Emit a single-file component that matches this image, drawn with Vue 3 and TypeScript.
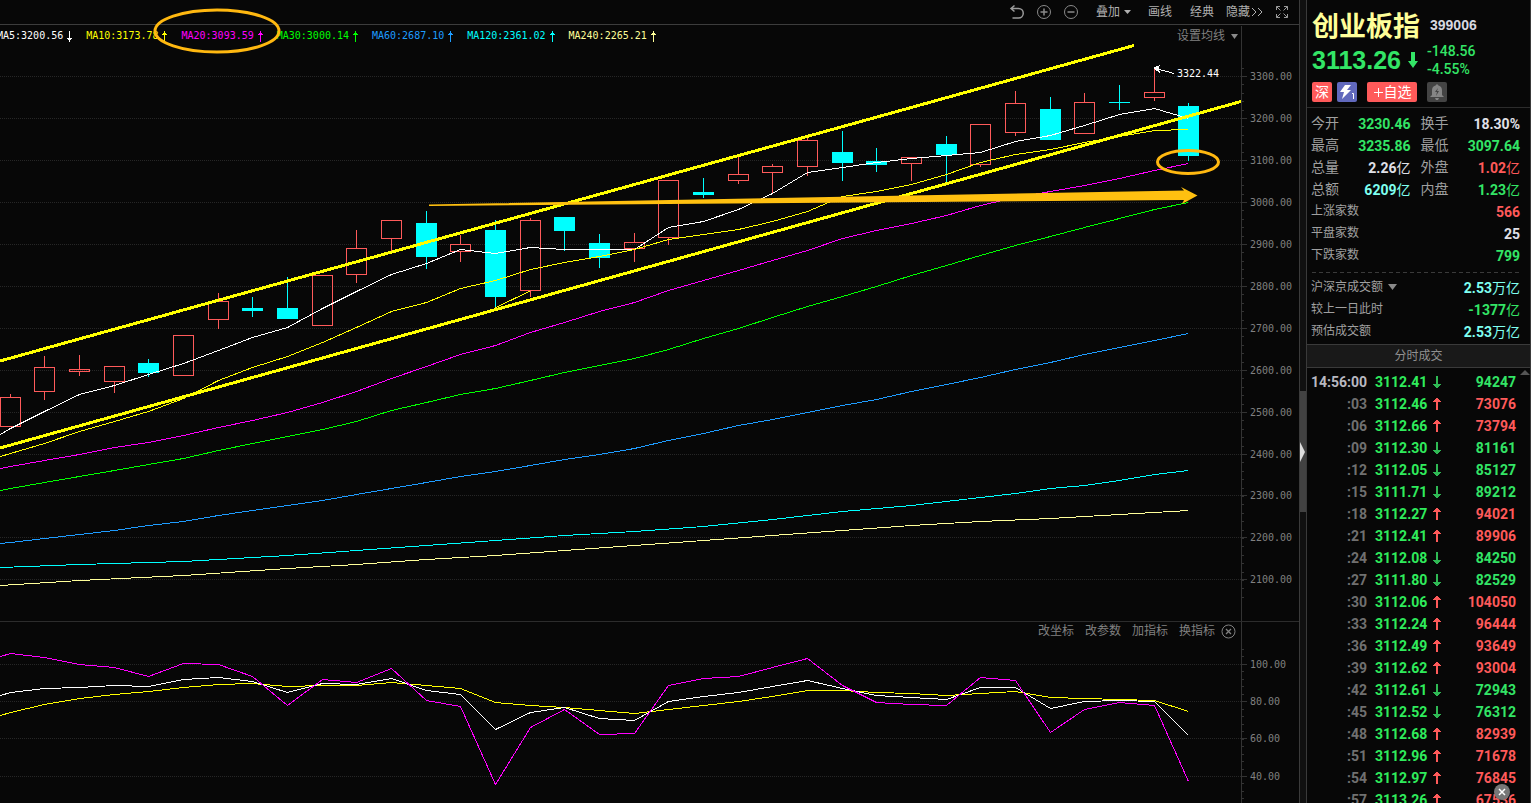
<script setup lang="ts">
type Point = [number, number]
type Candle = { x: number; top: number; bottom: number; high: number; low: number; up: boolean }
type Tone = 'green' | 'red' | 'white' | 'aqua'
type Stat = { label: string; value: string; unit?: string; tone: Tone; menu?: boolean }

const averages = [
  { name: 'MA5', value: '3200.56', up: false, color: '#ffffff' },
  { name: 'MA10', value: '3173.78', up: true, color: '#ffff00' },
  { name: 'MA20', value: '3093.59', up: true, color: '#ff00ff' },
  { name: 'MA30', value: '3000.14', up: true, color: '#00ff00' },
  { name: 'MA60', value: '2687.10', up: true, color: '#1e9cff' },
  { name: 'MA120', value: '2361.02', up: true, color: '#00ffff' },
  { name: 'MA240', value: '2265.21', up: true, color: '#ffff99' },
]

// x, body top, body bottom, wick top, wick bottom, rising
const rawCandles: [number, number, number, number, number, number][] = [
  [10, 397, 427, 394, 427, 1], [44, 367, 392, 356, 400, 1], [79, 369, 372, 355, 376, 1],
  [114, 366, 382, 366, 393, 1], [148, 363, 373, 359, 377, 0], [183, 335, 376, 335, 376, 1],
  [218, 301, 320, 293, 329, 1], [252, 308, 311, 297, 317, 0], [287, 308, 319, 277, 319, 0],
  [322, 275, 326, 275, 326, 1], [356, 248, 275, 230, 283, 1], [391, 220, 239, 220, 251, 1],
  [426, 223, 257, 211, 269, 0], [460, 244, 252, 235, 262, 1], [495, 230, 297, 220, 308, 0],
  [530, 220, 291, 218, 297, 1], [564, 217, 231, 217, 251, 0], [599, 243, 258, 234, 268, 0],
  [634, 242, 249, 233, 262, 1], [668, 180, 238, 180, 245, 1], [703, 192, 195, 178, 198, 0],
  [738, 174, 181, 157, 184, 1], [772, 166, 173, 164, 194, 1], [807, 140, 167, 138, 176, 1],
  [842, 152, 163, 131, 181, 0], [876, 161, 165, 148, 172, 0], [911, 157, 164, 157, 181, 1],
  [946, 144, 155, 136, 182, 0], [980, 124, 165, 124, 167, 1], [1015, 103, 133, 91, 136, 1],
  [1050, 109, 140, 97, 140, 0], [1084, 102, 134, 93, 134, 1], [1119, 102, 103, 85, 110, 0],
  [1154, 92, 98, 67, 101, 1], [1188, 106, 156, 103, 161, 0],
]
const candles: Candle[] = rawCandles.map(([x, top, bottom, high, low, up]) => ({
  x, top, bottom, high, low, up: up === 1,
}))
const xs = rawCandles.map((c) => c[0])

const join = (points: Point[]) => points.map((p) => p.join(',')).join(' ')
const series = (start: number, ys: number[]) => join([[0, start], ...ys.map((y, i): Point => [xs[i], y])])

const lines = [
  {
    color: '#ffffff',
    points: series(434, [428, 411, 394, 385, 374, 363, 350, 337, 327, 308, 291, 274, 263, 249, 253, 247, 249, 249, 249, 227, 221, 209, 193, 172, 167, 162, 158, 155, 152, 141, 135, 125, 114, 108, 118]),
  },
  {
    color: '#ffff00',
    points: series(456, [453, 443, 431, 421, 411, 398, 380, 367, 356, 342, 327, 311, 302, 288, 280, 269, 262, 256, 249, 239, 234, 229, 221, 211, 196, 191, 184, 174, 162, 154, 149, 142, 136, 130, 129]),
  },
  {
    color: '#ff00ff',
    points: series(468, [466, 460, 454, 447, 442, 435, 427, 420, 412, 402, 391, 378, 366, 354, 345, 332, 322, 311, 302, 290, 280, 270, 260, 250, 238, 230, 223, 215, 205, 197, 191, 185, 178, 170, 163]),
  },
  {
    color: '#00ff00',
    points: series(490, [488, 482, 476, 470, 464, 458, 450, 443, 436, 429, 421, 410, 402, 394, 388, 380, 372, 365, 358, 349, 338, 328, 317, 306, 296, 286, 275, 265, 255, 245, 236, 227, 218, 209, 202]),
  },
  {
    color: '#1e9cff',
    points: series(543, [542, 538, 534, 530, 525, 521, 515, 510, 505, 500, 494, 488, 482, 476, 471, 465, 459, 454, 448, 440, 433, 425, 419, 412, 405, 399, 391, 384, 377, 369, 362, 354, 347, 340, 333]),
  },
  {
    color: '#00ffff',
    points: join([[0, 567], [79, 564], [183, 561], [287, 555], [356, 550], [426, 545], [495, 540], [564, 535], [634, 531], [703, 526], [772, 519], [842, 511], [911, 505], [980, 497], [1015, 493], [1050, 488], [1084, 485], [1119, 480], [1154, 474], [1188, 470]]),
  },
  {
    color: '#ffff99',
    points: join([[0, 585], [79, 580], [183, 575], [287, 568], [356, 564], [426, 559], [495, 555], [564, 550], [634, 545], [703, 540], [772, 535], [842, 530], [911, 525], [980, 521], [1050, 518], [1119, 514], [1188, 510]]),
  },
]

const oscillators = [
  {
    color: '#ffff00',
    points: series(715, [712, 704, 698, 694, 691, 687, 684, 683, 686, 685, 685, 682, 685, 688, 702, 705, 707, 710, 713, 709, 705, 701, 696, 690, 690, 692, 693, 695, 693, 691, 697, 698, 699, 700, 711]),
  },
  {
    color: '#ffffff',
    points: series(695, [692, 688, 687, 685, 686, 679, 677, 681, 692, 683, 684, 678, 690, 694, 729, 712, 707, 718, 720, 701, 696, 692, 686, 680, 688, 695, 697, 699, 687, 687, 708, 701, 700, 701, 735]),
  },
  {
    color: '#ff00ff',
    points: series(656, [653, 657, 664, 667, 676, 663, 664, 676, 705, 679, 682, 668, 700, 706, 784, 727, 709, 734, 733, 685, 678, 676, 667, 658, 685, 702, 704, 705, 677, 680, 732, 709, 702, 705, 781]),
  },
]

const priceMarks = [76, 118, 160, 202, 244, 286, 328, 370, 412, 454, 495, 537, 579].map((y, i) => ({
  y,
  label: `${3300 - i * 100}.00`,
}))
const priceTicks = Array.from({ length: 64 }, (_, i) => Math.round(67.6 + i * 8.4)).filter((y) => y < 615)
const oscMarks = [
  { y: 664, label: '100.00' },
  { y: 701, label: '80.00' },
  { y: 738, label: '60.00' },
  { y: 776, label: '40.00' },
]
const oscTicks = Array.from({ length: 21 }, (_, i) => Math.round(649 + i * 7.47))

const indicatorActions = ['改坐标', '改参数', '加指标', '换指标']

const pairRows: Stat[][] = [
  [{ label: '今开', value: '3230.46', tone: 'green' }, { label: '换手', value: '18.30%', tone: 'white' }],
  [{ label: '最高', value: '3235.86', tone: 'green' }, { label: '最低', value: '3097.64', tone: 'green' }],
  [{ label: '总量', value: '2.26', unit: '亿', tone: 'white' }, { label: '外盘', value: '1.02', unit: '亿', tone: 'red' }],
  [{ label: '总额', value: '6209', unit: '亿', tone: 'aqua' }, { label: '内盘', value: '1.23', unit: '亿', tone: 'green' }],
]
const breadthRows: Stat[] = [
  { label: '上涨家数', value: '566', tone: 'red' },
  { label: '平盘家数', value: '25', tone: 'white' },
  { label: '下跌家数', value: '799', tone: 'green' },
]
const turnoverRows: Stat[] = [
  { label: '沪深京成交额', value: '2.53', unit: '万亿', tone: 'aqua', menu: true },
  { label: '较上一日此时', value: '-1377', unit: '亿', tone: 'green' },
  { label: '预估成交额', value: '2.53', unit: '万亿', tone: 'aqua' },
]

const trades: { time: string; price: string; up: boolean; volume: string }[] = [
  { time: '14:56:00', price: '3112.41', up: false, volume: '94247' },
  { time: ':03', price: '3112.46', up: true, volume: '73076' },
  { time: ':06', price: '3112.66', up: true, volume: '73794' },
  { time: ':09', price: '3112.30', up: false, volume: '81161' },
  { time: ':12', price: '3112.05', up: false, volume: '85127' },
  { time: ':15', price: '3111.71', up: false, volume: '89212' },
  { time: ':18', price: '3112.27', up: true, volume: '94021' },
  { time: ':21', price: '3112.41', up: true, volume: '89906' },
  { time: ':24', price: '3112.08', up: false, volume: '84250' },
  { time: ':27', price: '3111.80', up: false, volume: '82529' },
  { time: ':30', price: '3112.06', up: true, volume: '104050' },
  { time: ':33', price: '3112.24', up: true, volume: '96444' },
  { time: ':36', price: '3112.49', up: true, volume: '93649' },
  { time: ':39', price: '3112.62', up: true, volume: '93004' },
  { time: ':42', price: '3112.61', up: false, volume: '72943' },
  { time: ':45', price: '3112.52', up: false, volume: '76312' },
  { time: ':48', price: '3112.68', up: true, volume: '82939' },
  { time: ':51', price: '3112.96', up: true, volume: '71678' },
  { time: ':54', price: '3112.97', up: true, volume: '76845' },
  { time: ':57', price: '3113.26', up: true, volume: '67536' },
]
</script>

<template>
  <div class="terminal">
    <main class="charts">
      <div class="toolbar">
        <button type="button" class="tool undo" aria-label="撤销">
          <svg width="16" height="16" viewBox="0 0 16 16" fill="none" stroke="#9a9a9a" stroke-width="1.5">
            <path d="M5.5 1.5 2 4.5l3.5 3M2 4.5h7.500a4.600 4.600 0 0 1 0 9.500H3.500" />
          </svg>
        </button>
        <button type="button" class="tool plus" aria-label="放大">
          <svg width="16" height="16" viewBox="0 0 16 16" fill="none" stroke="#8a8a8a">
            <circle cx="8" cy="8" r="6.500" /><path d="M4.500 8h7M8 4.500v7" stroke-width="1.500" />
          </svg>
        </button>
        <button type="button" class="tool minus" aria-label="缩小">
          <svg width="16" height="16" viewBox="0 0 16 16" fill="none" stroke="#8a8a8a">
            <circle cx="8" cy="8" r="6.500" /><path d="M4.500 8h7" stroke-width="1.500" />
          </svg>
        </button>
        <button type="button" class="tool overlay">叠加<svg width="7" height="4" viewBox="0 0 7 4"><path d="M0 0h7L3.500 4z" fill="#b0b0b0" /></svg></button>
        <button type="button" class="tool draw">画线</button>
        <button type="button" class="tool classic">经典</button>
        <button type="button" class="tool hide">隐藏<svg width="12" height="10" viewBox="0 0 12 10" fill="none" stroke="#b0b0b0"><path d="M1 1l4 4-4 4M7 1l4 4-4 4" /></svg></button>
        <button type="button" class="tool expand" aria-label="全屏">
          <svg width="12" height="12" viewBox="0 0 12 12" fill="none" stroke="#9a9a9a">
            <path d="M.5 4V.5H4M.5.5 4.500 4.500M8 .5h3.500V4M11.500.5l-4 4M.5 8v3.500H4M.5 11.500l4-4M8 11.500h3.500V8M11.500 11.500l-4-4" />
          </svg>
        </button>
      </div>

      <section class="panel price-panel">
        <div class="plot">
          <svg class="fill" viewBox="0 25 1241 596" preserveAspectRatio="none" shape-rendering="crispEdges">
            <line v-for="m in priceMarks" :key="m.y" x1="0" x2="1241" :y1="m.y + 0.5" :y2="m.y + 0.5" stroke="#262626" stroke-dasharray="1 1" />
            <g v-for="c in candles" :key="c.x">
              <template v-if="c.up">
                <rect :x="c.x - 9.5" :y="c.top + 0.5" width="20" :height="c.bottom - c.top - 1" fill="none" stroke="#ff5a5a" />
                <rect :x="c.x" :y="c.high" width="1" :height="c.top - c.high" fill="#ff5a5a" />
                <rect :x="c.x" :y="c.bottom" width="1" :height="c.low - c.bottom" fill="#ff5a5a" />
              </template>
              <template v-else>
                <rect :x="c.x - 10" :y="c.top" width="21" :height="c.bottom - c.top" fill="#00ffff" />
                <rect :x="c.x" :y="c.high" width="1" :height="c.low - c.high" fill="#00ffff" />
              </template>
            </g>
            <polyline v-for="l in lines" :key="l.color" :points="l.points" :stroke="l.color" fill="none" transform="translate(.5 .5)" />
            <path d="M495 308 530 291" stroke="#ffff00" />
            <path d="M0 361 1134 45.500M0 448 1241 101.500" stroke="#ffff00" stroke-width="3" fill="none" />
            <path d="M1156 68.500 1174 73.500" stroke="#ffffff" />
            <path d="M1153 68l7-3-1 3 1 5z" fill="#ffffff" />
            <g shape-rendering="geometricPrecision">
              <path d="M429 204.500 1184 190.500 1181 187 1197.500 195.500 1182 204 1184 200 429 206z" fill="#ffc010" />
              <ellipse cx="1188" cy="162" rx="30.500" ry="11.500" fill="none" stroke="#ffb810" stroke-width="3" />
            </g>
            <text x="1177" y="77" class="mark" fill="#ffffff">3322.44</text>
          </svg>
          <div class="legend">
            <span v-for="a in averages" :key="a.name" class="legend-item" :style="{ color: a.color }">
              {{ a.name }}:{{ a.value }}
              <svg width="6" height="11" viewBox="0 0 6 11" fill="currentColor" shape-rendering="crispEdges">
                <path v-if="a.up" d="M3 0h1v2h1v1h1v1H4v7H3V4H1V3h1V2h1z" />
                <path v-else d="M3 0h1v7h2v1H5v1H4v2H3V9H2V8H1V7h2z" />
              </svg>
            </span>
          </div>
          <button type="button" class="average-menu">设置均线<svg width="7" height="5" viewBox="0 0 7 5"><path d="M0 0h7L3.500 5z" fill="#8a8a8a" /></svg></button>
          <svg class="ring" width="130" height="48" viewBox="0 0 130 48">
            <ellipse cx="65" cy="24" rx="62" ry="21" fill="none" stroke="#ffb810" stroke-width="3" />
          </svg>
        </div>
        <div class="axis">
          <svg class="fill" viewBox="1241 25 58 596" preserveAspectRatio="none" shape-rendering="crispEdges">
            <path d="M1241.500 26V621" stroke="#333333" />
            <path v-for="y in priceTicks" :key="y" :d="`M1242 ${y + 0.5}h2`" stroke="#333333" />
            <g v-for="m in priceMarks" :key="m.y">
              <path :d="`M1242 ${m.y + 0.5}h5`" stroke="#333333" />
              <text x="1250" :y="m.y + 4" class="mark" fill="#808080">{{ m.label }}</text>
            </g>
          </svg>
        </div>
      </section>

      <section class="panel osc-panel">
        <div class="plot">
          <svg class="fill" viewBox="0 622 1241 181" preserveAspectRatio="none" shape-rendering="crispEdges">
            <line v-for="m in oscMarks" :key="m.y" x1="0" x2="1241" :y1="m.y + 0.5" :y2="m.y + 0.5" stroke="#262626" stroke-dasharray="1 1" />
            <polyline v-for="l in oscillators" :key="l.color" :points="l.points" :stroke="l.color" fill="none" transform="translate(.5 .5)" />
          </svg>
          <div class="indicator-bar">
            <button v-for="a in indicatorActions" :key="a" type="button" class="indicator-action">{{ a }}</button>
            <button type="button" class="indicator-close" aria-label="关闭">
              <svg width="15" height="15" viewBox="0 0 15 15" fill="none" stroke="#808080">
                <circle cx="7.500" cy="7.500" r="6.500" /><path d="M5 5l5 5M10 5l-5 5" stroke-width="1.300" />
              </svg>
            </button>
          </div>
        </div>
        <div class="axis">
          <svg class="fill" viewBox="1241 622 58 181" preserveAspectRatio="none" shape-rendering="crispEdges">
            <path d="M1241.500 622V803" stroke="#333333" />
            <path v-for="y in oscTicks" :key="y" :d="`M1242 ${y + 0.5}h2`" stroke="#333333" />
            <g v-for="m in oscMarks" :key="m.y">
              <path :d="`M1242 ${m.y + 0.5}h5`" stroke="#333333" />
              <text x="1250" :y="m.y + 4" class="mark" fill="#808080">{{ m.label }}</text>
            </g>
          </svg>
        </div>
      </section>
    </main>

    <div class="splitter">
      <button type="button" class="handle" aria-label="收起">
        <svg width="5" height="20" viewBox="0 0 5 20"><path d="M0 0 5 10 0 20z" fill="#dddddd" /></svg>
      </button>
    </div>

    <aside class="quote">
      <header class="quote-head">
        <div class="name-row">
          <h1 class="name">创业板指</h1>
          <span class="code">399006</span>
        </div>
        <div class="price-row">
          <span class="price">3113.26</span>
          <svg class="price-arrow" width="11" height="16" viewBox="0 0 11 16"><path d="M4 0h4v9h3L6 16 1 9h3z" fill="#33e566" /></svg>
          <div class="change"><span>-148.56</span><span>-4.55%</span></div>
        </div>
        <div class="badge-row">
          <span class="badge market">深</span>
          <span class="badge flash">
            <svg width="20" height="20" viewBox="0 0 20 20"><path d="M8 3h6l-4 5h4L5 17l2-7H3z" fill="#ffffff" /><path d="M15 11.500h1.500V17" fill="none" stroke="#ffffff" /></svg>
          </span>
          <button type="button" class="follow">
            <svg width="11" height="11" viewBox="0 0 11 11" shape-rendering="crispEdges"><path d="M5 1h1v4h4v1H6v4H5V6H1V5h4z" fill="#ffffff" /></svg>自选
          </button>
          <button type="button" class="badge bell" aria-label="预警">
            <svg width="20" height="20" viewBox="0 0 20 20"><path d="M10 2l1.500 1.500C14 4 15 6 15 8.500V13l2 2H3l2-2V8.500C5 6 6 4 8.500 3.500zM8 16h4l-1 2H9z" fill="#858585" /><path d="M11 6 8 10h2l-1 4 3-5h-2z" fill="#444444" /></svg>
          </button>
        </div>
      </header>

      <div class="stats">
        <div v-for="(row, i) in pairRows" :key="i" class="pair">
          <div v-for="s in row" :key="s.label" class="stat">
            <span class="label large">{{ s.label }}</span>
            <span class="value" :class="s.tone">{{ s.value }}<span v-if="s.unit" class="unit">{{ s.unit }}</span></span>
          </div>
        </div>
        <div v-for="s in breadthRows" :key="s.label" class="stat">
          <span class="label">{{ s.label }}</span><span class="value" :class="s.tone">{{ s.value }}</span>
        </div>
      </div>
      <div class="stats turnover">
        <div v-for="s in turnoverRows" :key="s.label" class="stat">
          <button v-if="s.menu" type="button" class="label menu-label">{{ s.label }}<svg width="9" height="6" viewBox="0 0 9 6"><path d="M0 0h9L4.500 6z" fill="#8a8a8a" /></svg></button>
          <span v-else class="label">{{ s.label }}</span>
          <span class="value" :class="s.tone">{{ s.value }}<span v-if="s.unit" class="unit">{{ s.unit }}</span></span>
        </div>
      </div>

      <h2 class="trades-title">分时成交</h2>
      <div class="trades">
        <table>
          <tbody>
            <tr v-for="(t, i) in trades" :key="t.time">
              <td class="time" :class="{ first: i === 0 }">{{ t.time }}</td>
              <td class="deal">{{ t.price }}</td>
              <td class="direction">
                <svg width="8" height="12" viewBox="0 0 8 12" shape-rendering="crispEdges" :fill="t.up ? '#ff5a5a' : '#2fb954'">
                  <path v-if="t.up" d="M3 0h2v1h1v1h1v1h1v1H5v8H3V4H0V3h1V2h1V1h1z" />
                  <path v-else d="M3 0h2v8h3v1H7v1H6v1H5v1H3v-1H2v-1H1V9H0V8h3z" />
                </svg>
              </td>
              <td class="volume" :class="t.up ? 'red' : 'green'">{{ t.volume }}</td>
            </tr>
          </tbody>
        </table>
        <svg class="scroll-up" width="10" height="6" viewBox="0 0 10 6"><path d="M0 5 5 0l5 5z" fill="#555555" /></svg>
        <button type="button" class="dismiss" aria-label="关闭">
          <svg width="16" height="16" viewBox="0 0 16 16"><circle cx="8" cy="8" r="8" fill="#777777" /><path d="M5 5l6 6M11 5l-6 6" stroke="#ffffff" stroke-width="1.500" /></svg>
        </button>
      </div>
    </aside>
  </div>
</template>

<style>
body {
  background: #070707;
}
</style>

<style scoped>
.terminal {
  display: grid;
  grid-template-columns: minmax(0, 1fr) 6px 225px;
  height: 100vh;
  overflow: hidden;
  background: #070707;
  color: #b0b0b0;
  font-family: "Liberation Sans", "Noto Sans CJK SC", sans-serif;
  font-size: 12px;
}
button {
  display: flex;
  align-items: center;
  padding: 0;
  border: 0;
  background: none;
  color: inherit;
  font: inherit;
  white-space: nowrap;
  cursor: pointer;
}
svg {
  display: block;
  flex: none;
}
.charts {
  display: grid;
  grid-template-rows: 25px minmax(0, 596fr) minmax(0, 182fr);
  border-right: 1px solid #3a3a3a;
}
.toolbar {
  display: flex;
  align-items: center;
  justify-content: flex-end;
  box-sizing: border-box;
  padding-right: 11px;
  border-bottom: 1px solid #3c3c3c;
}
.tool {
  height: 22px;
  line-height: 22px;
}
.plus,
.minus {
  margin-left: 11px;
}
.overlay {
  gap: 4px;
  margin-left: 17px;
}
.draw {
  margin-left: 17px;
}
.classic {
  margin-left: 18px;
}
.hide {
  margin-left: 12px;
  gap: 1px;
}
.expand {
  margin-left: 13px;
}
.panel {
  display: grid;
  grid-template-columns: minmax(0, 1fr) 58px;
  min-height: 0;
}
.osc-panel {
  border-top: 1px solid #2c2c2c;
}
.plot,
.axis {
  position: relative;
  min-height: 0;
}
.fill {
  position: absolute;
  inset: 0;
  width: 100%;
  height: 100%;
}
.mark {
  font-family: "DejaVu Sans Mono", monospace;
  font-size: 10px;
}
.legend {
  position: absolute;
  top: 4px;
  left: -3px;
  display: flex;
  gap: 14px;
  font: 10px/14px "DejaVu Sans Mono", monospace;
  white-space: nowrap;
}
.legend-item {
  display: flex;
  align-items: center;
  gap: 3px;
}
.average-menu {
  position: absolute;
  top: 1px;
  right: 3px;
  gap: 6px;
  color: #808080;
  line-height: 20px;
}
.ring {
  position: absolute;
  top: -18px;
  left: 152px;
}
.indicator-bar {
  position: absolute;
  top: 0;
  right: 5px;
  display: flex;
  align-items: center;
  color: #808080;
  line-height: 18px;
}
.indicator-action {
  margin-right: 11px;
}
.indicator-close {
  margin-left: -5px;
}
.splitter {
  display: flex;
  align-items: center;
  padding-top: 100px;
  box-sizing: border-box;
  background: #101010;
}
.handle {
  width: 6px;
  height: 121px;
  background: #424242;
}
.quote {
  display: flex;
  flex-direction: column;
  min-height: 0;
  box-sizing: border-box;
  border-left: 1px solid #3a3a3a;
  border-right: 1px solid #3a3a3a;
}
.quote-head {
  padding: 8px 5px 5px;
  border-bottom: 1px solid #2c2c2c;
}
.name-row {
  display: flex;
  align-items: center;
  gap: 10px;
  height: 34px;
}
.name {
  margin: 0;
  color: #ffff99;
  font: bold 27px/32px "Noto Sans CJK SC", sans-serif;
}
.code {
  color: #d8d8e0;
  font-size: 14px;
  font-weight: bold;
}
.price-row {
  display: flex;
  align-items: center;
  height: 36px;
  color: #33e566;
}
.price {
  font-size: 25px;
  font-weight: bold;
}
.price-arrow {
  margin: 0 9px 0 6px;
}
.change {
  display: flex;
  flex-direction: column;
  font: 500 14px/18px Roboto, sans-serif;
}
.badge-row {
  display: flex;
  margin-top: 4px;
}
.badge,
.follow {
  display: flex;
  align-items: center;
  justify-content: center;
  width: 20px;
  height: 20px;
  border-radius: 2px;
  color: #ffffff;
  font-size: 14px;
  line-height: 20px;
}
.market {
  background: #ff5a5a;
}
.flash {
  margin-left: 5px;
  background: #6169bd;
}
.follow {
  width: 50px;
  margin: 0 10px;
  background: #ff5a5a;
}
.bell {
  background: #444444;
}
.stats {
  padding: 5px 10px 5px 4px;
}
.turnover {
  padding: 5px 10px 0 4px;
  background: repeating-linear-gradient(90deg, #3a3a3a 0 4px, transparent 4px 7px) 5px 0 / 208px 1px no-repeat;
}
.pair {
  display: grid;
  grid-template-columns: 1fr 1fr;
  gap: 10px;
}
.stat {
  display: flex;
  align-items: flex-start;
  justify-content: space-between;
  height: 22px;
}
.label {
  color: #a0a0a0;
  font-size: 12px;
  line-height: 20px;
}
.large {
  font-size: 14px;
}
.menu-label {
  gap: 5px;
}
.value {
  font: bold 14px/22px Roboto, "Noto Sans CJK SC", sans-serif;
}
.unit {
  font-weight: normal;
}
.green {
  color: #33e566;
}
.red {
  color: #ff5a5a;
}
.white {
  color: #e0e0e8;
}
.aqua {
  color: #7ffff0;
}
.trades-title {
  margin: 1px 0 0;
  border: solid #3a3a3a;
  border-width: 1px 0;
  background: #191919;
  color: #909090;
  font-size: 12px;
  font-weight: normal;
  line-height: 22px;
  text-align: center;
}
.trades {
  position: relative;
  flex: 1;
  min-height: 0;
  padding: 3px 14px 0 4px;
  overflow: hidden;
}
table {
  width: 100%;
  border-collapse: collapse;
  table-layout: fixed;
  font: bold 14px/22px Roboto, sans-serif;
}
td {
  height: 22px;
  padding: 0;
}
.time {
  width: 56px;
  color: #707070;
  text-align: right;
}
.first {
  color: #b8b8c0;
}
.deal {
  width: 60px;
  padding-left: 8px;
  box-sizing: border-box;
  color: #2fec5c;
}
.direction {
  width: 20px;
  padding-left: 6px;
  box-sizing: border-box;
}
.volume {
  text-align: right;
}
.scroll-up {
  position: absolute;
  top: 2px;
  right: 0;
}
.dismiss {
  position: absolute;
  right: 20px;
  bottom: 3px;
}
</style>
